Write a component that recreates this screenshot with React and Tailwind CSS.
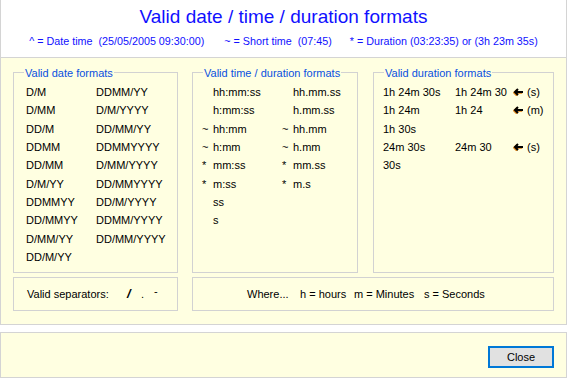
import React from "react";

const dateRows = [
  ["D/M", "DDMM/YY"],
  ["D/MM", "D/M/YYYY"],
  ["DD/M", "DD/MM/YY"],
  ["DDMM", "DDMMYYYY"],
  ["DD/MM", "D/MM/YYYY"],
  ["D/M/YY", "DD/MMYYYY"],
  ["DDMMYY", "DD/M/YYYY"],
  ["DD/MMYY", "DDMM/YYYY"],
  ["D/MM/YY", "DD/MM/YYYY"],
  ["DD/M/YY", ""],
];

const timeRows = [
  ["", "hh:mm:ss", "", "hh.mm.ss"],
  ["", "h:mm:ss", "", "h.mm.ss"],
  ["~", "hh:mm", "~", "hh.mm"],
  ["~", "h:mm", "~", "h.mm"],
  ["*", "mm:ss", "*", "mm.ss"],
  ["*", "m:ss", "*", "m.s"],
  ["", "ss", "", ""],
  ["", "s", "", ""],
];

const durRows = [
  ["1h 24m 30s", "1h 24m 30", "(s)"],
  ["1h 24m", "1h 24", "(m)"],
  ["1h 30s", "", ""],
  ["24m 30s", "24m 30", "(s)"],
  ["30s", "", ""],
];

function Arrow() {
  return (
    <svg width="11" height="8" viewBox="0 0 11 8" className="block">
      <g transform="translate(-0.8,0.8)" stroke="#e0861a" strokeWidth="2" fill="none">
        <polyline points="5,1 2,4 5,7" />
        <line x1="2" y1="4" x2="10" y2="4" />
      </g>
      <g stroke="#000" strokeWidth="2" fill="none">
        <polyline points="5,1 2,4 5,7" />
        <line x1="2" y1="4" x2="10" y2="4" />
      </g>
    </svg>
  );
}

function Group({ title, className, children }) {
  return (
    <div className={"relative border border-[#d2d2d2] " + className}>
      <span className="absolute left-[10px] top-[-7px] bg-[#ffffe1] px-[1px] leading-[14px] text-[#0a4fe0]">
        {title}
      </span>
      {children}
    </div>
  );
}

export default function App() {
  return (
    <div
      className="w-[567px] h-[378px] bg-white flex flex-col text-[11px] text-black"
      style={{ fontFamily: '"Liberation Sans", Arial, sans-serif' }}
    >
      <div className="h-[57px] border-x border-[#d4d4d4] flex flex-col items-center pt-[6px]">
        <div className="text-[19px] leading-[22px] text-[#1010ff]">
          Valid date / time / duration formats
        </div>
        <div className="mt-[7px] flex leading-[13px] text-[10.75px] text-[#1010ff] whitespace-pre">
          <span>^ = Date time  (25/05/2005 09:30:00)</span>
          <span className="ml-[20px]">~ = Short time  (07:45)</span>
          <span className="ml-[18px]">* = Duration (03:23:35) or (3h 23m 35s)</span>
        </div>
      </div>

      <div className="h-[268px] border border-[#d4d4d4] bg-[#ffffe1] pt-[14px] px-[12px]">
        <div className="flex">
          <Group title="Valid date formats" className="w-[165px] h-[201px]">
            <div className="grid grid-cols-[70px_1fr] pt-[10px] pl-[12px] leading-[18.33px]">
              {dateRows.map((r, i) => (
                <React.Fragment key={i}>
                  <span>{r[0]}</span>
                  <span>{r[1]}</span>
                </React.Fragment>
              ))}
            </div>
          </Group>

          <Group title="Valid time / duration formats" className="ml-[14px] w-[166px] h-[201px]">
            <div className="grid grid-cols-[11px_69px_11px_1fr] pt-[10px] pl-[9px] leading-[18.33px]">
              {timeRows.map((r, i) => (
                <React.Fragment key={i}>
                  <span>{r[0]}</span>
                  <span>{r[1]}</span>
                  <span>{r[2]}</span>
                  <span>{r[3]}</span>
                </React.Fragment>
              ))}
            </div>
          </Group>

          <Group title="Valid duration formats" className="ml-[15px] w-[181px] h-[201px]">
            <div className="grid grid-cols-[72px_58px_14px_1fr] pt-[10px] pl-[9px] leading-[18.33px]">
              {durRows.map((r, i) => (
                <React.Fragment key={i}>
                  <span>{r[0]}</span>
                  <span>{r[1]}</span>
                  <span className="flex items-center">{r[2] ? <Arrow /> : null}</span>
                  <span>{r[2]}</span>
                </React.Fragment>
              ))}
            </div>
          </Group>
        </div>

        <div className="flex mt-[4px]">
          <div className="w-[165px] h-[34px] border border-[#d2d2d2] flex items-center pl-[13px]">
            <span className="w-[100px]">Valid separators:</span>
            <span className="font-bold text-[13px] italic w-[14px]">/</span>
            <span className="w-[13px]">.</span>
            <span className="mb-[6px]">-</span>
          </div>
          <div className="ml-[14px] w-[362px] h-[34px] border border-[#d2d2d2] flex items-center pl-[54px]">
            <span className="w-[53px]">Where...</span>
            <span className="w-[54px]">h = hours</span>
            <span className="w-[70px]">m = Minutes</span>
            <span>s = Seconds</span>
          </div>
        </div>
      </div>

      <div className="mt-[7px] h-[46px] border border-[#d4d4d4] bg-[#ffffe1] flex justify-end items-start pt-[13px] pr-[12px]">
        <button className="w-[66px] h-[22px] border-2 border-[#0078d7] bg-[#e1e1e1] text-[11px] leading-none flex items-center justify-center">
          Close
        </button>
      </div>
    </div>
  );
}
